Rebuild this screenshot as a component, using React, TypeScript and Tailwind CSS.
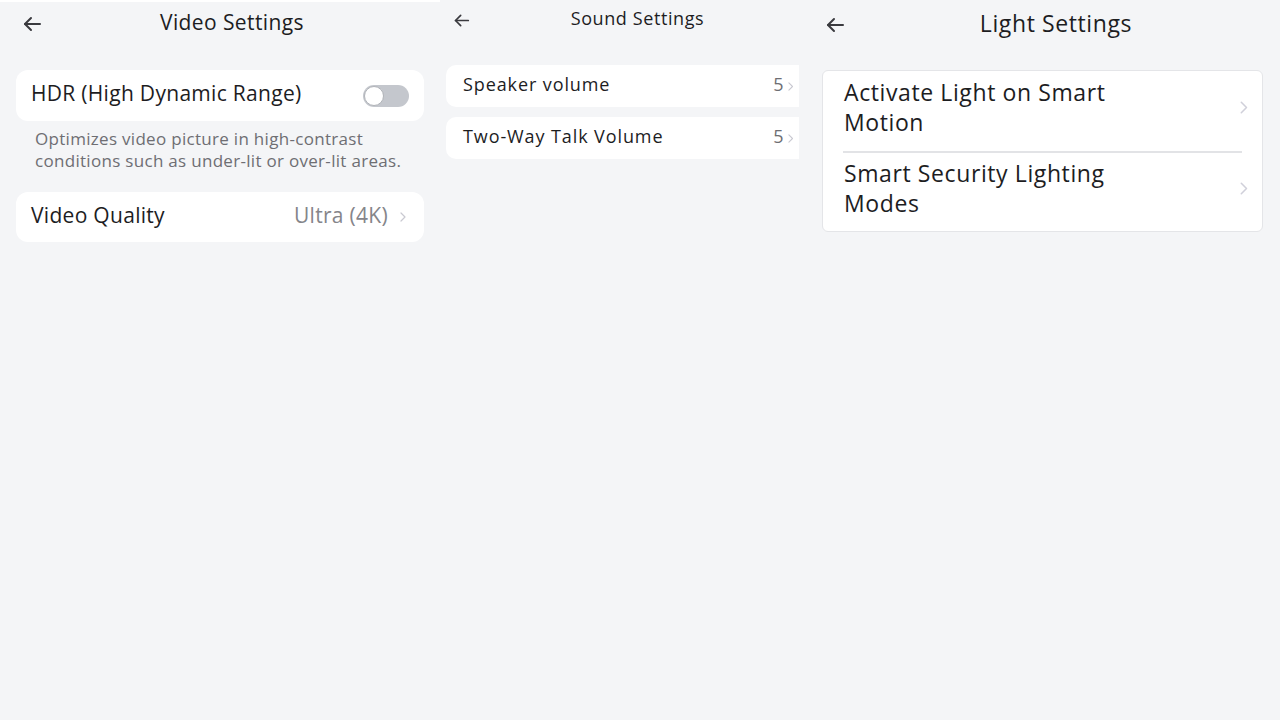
import React from 'react';

const font = { fontFamily: '"Open Sans", "Liberation Sans", sans-serif' };

const BackArrow: React.FC<{ size?: number }> = ({ size = 20 }) => (
  <svg width={size} height={size} viewBox="0 0 20 20" fill="none" stroke="#3a3a3f" strokeWidth="2" strokeLinecap="round" strokeLinejoin="round">
    <line x1="3" y1="10" x2="18" y2="10" />
    <polyline points="9,4 3,10 9,16" />
  </svg>
);

const Chevron: React.FC<{ h?: number; color?: string }> = ({ h = 10, color = '#c9c9d1' }) => (
  <svg width={h * 0.6} height={h} viewBox="0 0 6 10" fill="none" stroke={color} strokeWidth="1.2" strokeLinecap="round" strokeLinejoin="round">
    <polyline points="1,1 5,5 1,9" />
  </svg>
);

const VideoSettings: React.FC = () => (
  <div className="w-[440px] shrink-0 flex flex-col">
    <div className="h-[2px] bg-white" />
    <div className="h-[44px] flex items-center pl-[22px]">
      <BackArrow />
      <div className="flex-1 text-center pr-[18px] pb-[3px] text-[21px] tracking-[0.4px] text-[#1d1d1f]">Video Settings</div>
    </div>
    <div className="mx-[16px] mt-[24px] h-[51px] bg-white rounded-[12px] flex items-center pl-[15px] pr-[15px]">
      <span className="flex-1 text-[21px] tracking-[0.3px] pb-[3px] text-[#1d1d1f]">HDR (High Dynamic Range)</span>
      <div className="w-[46px] h-[22px] rounded-full bg-[#c4c7cd] flex items-center pl-[1px]">
        <div className="w-[20px] h-[20px] rounded-full bg-white border border-[#b0b3b8]" />
      </div>
    </div>
    <p className="mt-[7px] pl-[35px] pr-[10px] text-[17px] tracking-[0.3px] leading-[22px] text-[#6e6e73]">
      Optimizes video picture in high-contrast
      <br />
      conditions such as under-lit or over-lit areas.
    </p>
    <div className="mx-[16px] mt-[20px] h-[50px] bg-white rounded-[12px] flex items-center pl-[15px] pr-[18px]">
      <span className="flex-1 text-[21px] tracking-[0.3px] pb-[2px] text-[#1d1d1f]">Video Quality</span>
      <span className="text-[21px] tracking-[0.3px] pb-[2px] text-[#85858a] mr-[12px]">Ultra (4K)</span>
      <Chevron />
    </div>
  </div>
);

const SoundRow: React.FC<{ label: string; value: string }> = ({ label, value }) => (
  <div className="h-[42px] bg-white rounded-l-[10px] flex items-center pl-[17px] pr-[6px]">
    <span className="flex-1 text-[18px] tracking-[0.9px] pb-[4px] text-[#1d1d1f]">{label}</span>
    <span className="text-[18px] pb-[4px] text-[#6e6e73] mr-[4px]">{value}</span>
    <Chevron h={9} />
  </div>
);

const SoundSettings: React.FC = () => (
  <div className="w-[360px] shrink-0 flex flex-col">
    <div className="h-[40px] flex items-center pl-[13px]">
      <BackArrow size={17} />
      <div className="flex-1 text-center pl-[5px] pb-[4px] text-[18px] tracking-[0.6px] text-[#1d1d1f]">Sound Settings</div>
    </div>
    <div className="mt-[25px] ml-[6px] mr-[1px] flex flex-col gap-[10px]">
      <SoundRow label="Speaker volume" value="5" />
      <SoundRow label="Two-Way Talk Volume" value="5" />
    </div>
  </div>
);

const LightRow: React.FC<{ lines: string[] }> = ({ lines }) => (
  <div className="flex items-center pl-[21px] pr-[14px]">
    <div className="flex-1 text-[23px] tracking-[0.6px] leading-[30px] text-[#1d1d1f]">
      {lines.map((l) => (
        <div key={l}>{l}</div>
      ))}
    </div>
    <Chevron h={13} color="#d0d0da" />
  </div>
);

const LightSettings: React.FC = () => (
  <div className="flex-1 flex flex-col">
    <div className="h-[50px] flex items-center pl-[25px]">
      <BackArrow />
      <div className="flex-1 text-center pr-[13px] pb-[4px] text-[23px] tracking-[0.6px] text-[#1d1d1f]">Light Settings</div>
    </div>
    <div className="ml-[22px] mr-[17px] mt-[20px] bg-white border border-[#e4e5e8] rounded-[6px]">
      <div className="pt-[6px] pb-[14px]">
        <LightRow lines={['Activate Light on Smart', 'Motion']} />
      </div>
      <div className="mx-[20px] h-[2px] bg-[#e2e3e6]" />
      <div className="pt-[5px] pb-[13px]">
        <LightRow lines={['Smart Security Lighting', 'Modes']} />
      </div>
    </div>
  </div>
);

export default function App() {
  return (
    <div className="w-[1280px] h-[720px] bg-[#f4f5f7] flex overflow-hidden" style={font}>
      <VideoSettings />
      <SoundSettings />
      <LightSettings />
    </div>
  );
}
